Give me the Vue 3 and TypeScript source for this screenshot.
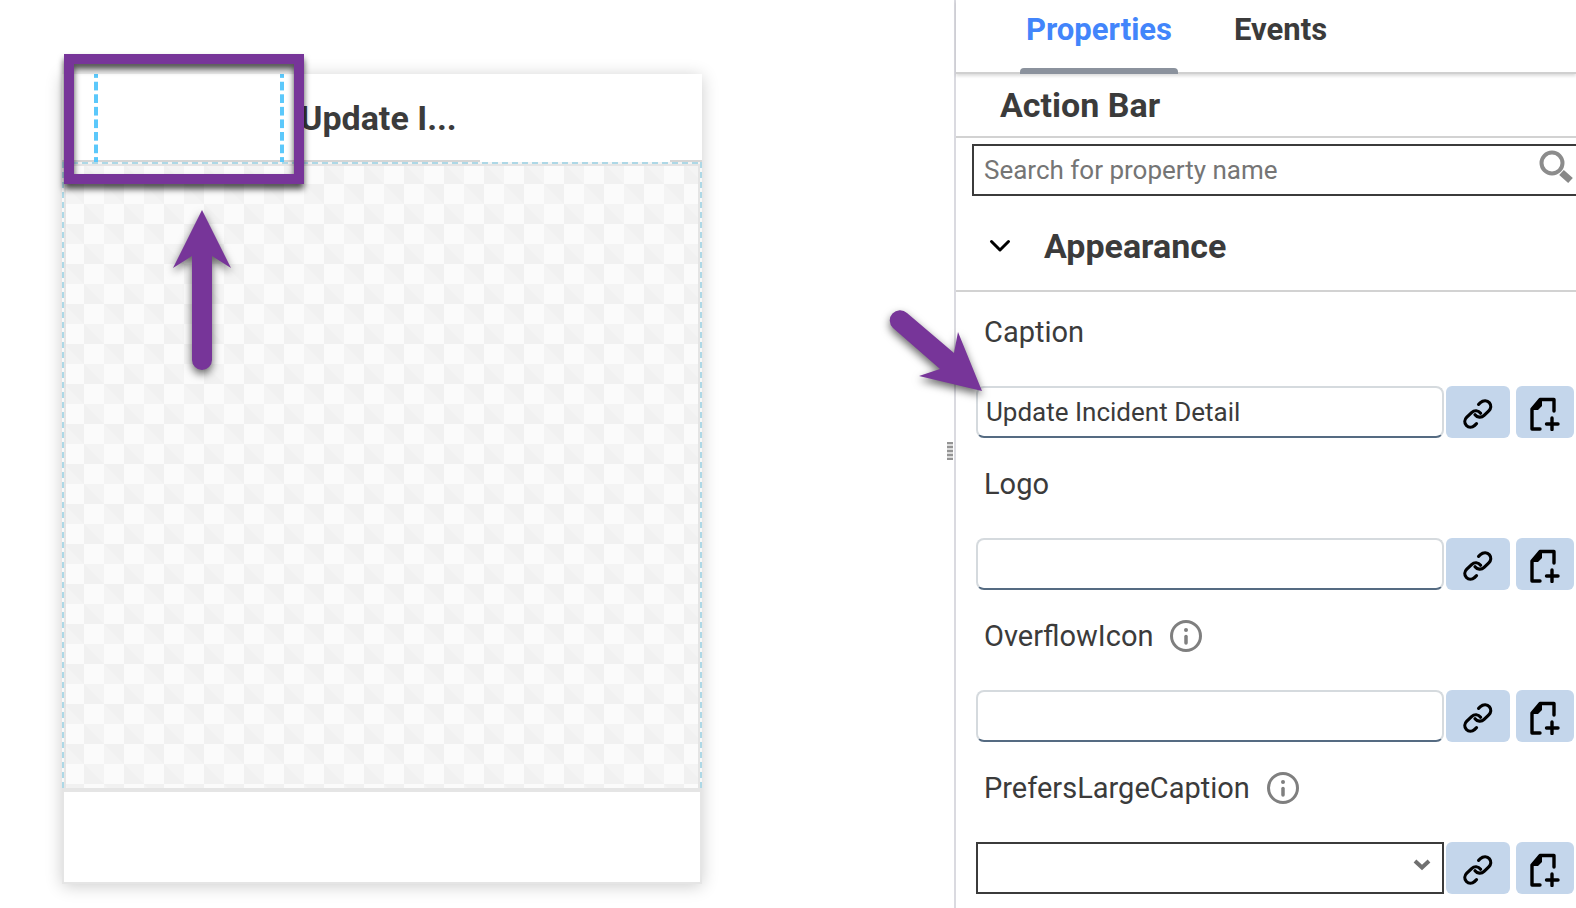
<script setup lang="ts">
import { ref } from 'vue'

interface Field {
  id: string
  label: string
  info: boolean
  kind: 'text' | 'select'
}

const fields: Field[] = [
  { id: 'caption', label: 'Caption', info: false, kind: 'text' },
  { id: 'logo', label: 'Logo', info: false, kind: 'text' },
  { id: 'overflow-icon', label: 'OverflowIcon', info: true, kind: 'text' },
  { id: 'prefers-large-caption', label: 'PrefersLargeCaption', info: true, kind: 'select' },
]

const values = ref<Record<string, string>>({
  caption: 'Update Incident Detail',
  logo: '',
  'overflow-icon': '',
  'prefers-large-caption': '',
})
const search = ref('')
const activeTab = ref('Properties')
const expanded = ref(true)
</script>

<template>
  <div class="editor">
    <main class="canvas">
      <section class="device">
        <header class="action-bar">
          <div class="logo-slot"></div>
          <h1 class="device-title">Update I...</h1>
          <span class="bar-line bar-line-start"></span>
          <span class="bar-line bar-line-end"></span>
        </header>
        <div class="device-body">
          <svg class="checker" width="100%" height="100%" aria-hidden="true">
            <defs>
              <pattern id="checks" width="40" height="40" patternUnits="userSpaceOnUse">
                <rect width="40" height="40" fill="#fbfbfb" />
                <path d="M20 0h20v20h-20zM0 20h20v20h-20z" fill="#f4f4f4" />
                <path d="M20 0v20h20zM0 20l20 20v-20z" fill="#f1f1f1" />
              </pattern>
            </defs>
            <rect width="100%" height="100%" fill="url(#checks)" />
          </svg>
          <span class="dash dash-top"></span>
          <span class="dash dash-left"></span>
          <span class="dash dash-right"></span>
          <div class="body-frame"></div>
        </div>
        <footer class="device-footer"></footer>
      </section>
      <div class="highlight"></div>
      <svg class="arrow arrow-up" width="80" height="190" viewBox="0 0 80 190" aria-hidden="true">
        <path d="M40 10 69 68 50 56V160a10 10 0 0 1-20 0V56L11 68Z" fill="#773599" />
      </svg>
    </main>

    <aside class="panel">
      <span class="grip"></span>
      <nav class="tabs">
        <button
          v-for="tab in ['Properties', 'Events']"
          :key="tab"
          type="button"
          class="tab"
          :class="{ active: tab === activeTab }"
          @click="activeTab = tab"
        >{{ tab }}</button>
      </nav>
      <h2 class="panel-title">Action Bar</h2>
      <div class="search">
        <input v-model="search" type="text" placeholder="Search for property name" aria-label="Search for property name" />
        <svg class="search-icon" width="34" height="34" viewBox="0 0 34 34" aria-hidden="true">
          <circle cx="13" cy="13" r="10.500" fill="none" stroke="#8c8c8c" stroke-width="4" />
          <path d="M22.500 22.500 31.500 30.500" stroke="#888" stroke-width="7" />
        </svg>
      </div>
      <button type="button" class="section-head" :aria-expanded="expanded" @click="expanded = !expanded">
        <svg width="24" height="16" viewBox="0 0 24 16" aria-hidden="true">
          <path d="M3.500 3.500 12 12 20.500 3.500" fill="none" stroke="#000" stroke-width="3" stroke-linecap="round" stroke-linejoin="round" />
        </svg>
        <span>Appearance</span>
      </button>

      <div v-show="expanded" class="fields">
        <div v-for="field in fields" :key="field.id" class="field">
          <div class="field-label">
            <label :for="field.id">{{ field.label }}</label>
            <svg v-if="field.info" width="32" height="32" viewBox="0 0 32 32" aria-hidden="true">
              <circle cx="16" cy="16" r="14.500" fill="none" stroke="#7f7f7f" stroke-width="3" />
              <circle cx="16" cy="10" r="2" fill="#7f7f7f" />
              <path d="M16 16.500V23" stroke="#7f7f7f" stroke-width="3.500" stroke-linecap="round" />
            </svg>
          </div>
          <div class="field-row">
            <input v-if="field.kind === 'text'" :id="field.id" v-model="values[field.id]" class="text-box" type="text" />
            <div v-else class="select-wrap">
              <select :id="field.id" v-model="values[field.id]">
                <option value=""></option>
                <option value="true">true</option>
                <option value="false">false</option>
              </select>
              <svg width="18" height="14" viewBox="0 0 18 14" aria-hidden="true">
                <path d="M2 3 9 9.500 16 3" fill="none" stroke="#707070" stroke-width="4" />
              </svg>
            </div>
            <button type="button" class="tool tool-link" aria-label="Link">
              <svg width="32" height="32" viewBox="0 0 32 32" aria-hidden="true">
                <g fill="none" stroke="#000" stroke-width="3.200" stroke-linecap="round">
                  <path d="M16.600 6.400l1.800-1.700c3-2.800 7-2.400 9 .1 2 2.500 1.700 5.800-.6 8l-4.700 4.600c-2.800 2.700-6.700 2.300-9.100-.7" />
                  <path d="M18.600 15.200c-2.300-3-6.200-3.300-9-.6l-4.800 4.500c-2.500 2.400-2.600 6-.4 8.400 2.200 2.300 5.700 2.300 8.200 0l1.900-1.800" />
                </g>
              </svg>
            </button>
            <button type="button" class="tool tool-add" aria-label="Add">
              <svg width="32" height="34" viewBox="0 0 32 34" aria-hidden="true">
                <g fill="none" stroke="#000" stroke-width="3.400" stroke-linecap="round" stroke-linejoin="round">
                  <path d="M11 32H3V12l8-9.500h14V14" />
                  <path d="M23 21v11.500M17.500 27h11.500" />
                </g>
                <path d="M3 13V10.500L10.500 2H13v7l-4 4Z" fill="#000" />
              </svg>
            </button>
          </div>
        </div>
      </div>
      <svg class="arrow arrow-caption" width="130" height="120" viewBox="0 0 130 120" aria-hidden="true">
        <path d="M37 13 84 53 88 32 112 91 49 76 70 69 23 28A10 10 0 0 1 37 13Z" fill="#773599" />
      </svg>
    </aside>
  </div>
</template>

<style>
body {
  background: #fff;
}
</style>

<style scoped>
* {
  box-sizing: border-box;
}

.editor {
  display: grid;
  grid-template-columns: minmax(0, 1fr) 622px;
  height: 100vh;
  overflow: hidden;
  font-family: Roboto, "Liberation Sans", sans-serif;
  color: #3b3b3b;
}

button,
input,
select {
  font-family: inherit;
  color: inherit;
  border-radius: 0;
  margin: 0;
}

.canvas {
  position: relative;
  padding: 74px 62px;
}

.device {
  width: 640px;
  box-shadow: 0 2px 16px rgba(0, 0, 0, 0.2);
}

.action-bar {
  position: relative;
  display: flex;
  align-items: center;
  height: 88px;
  padding-left: 32px;
  background: #fff;
}

.logo-slot {
  position: relative;
  z-index: 1;
  width: 190px;
  height: 88px;
  background:
    linear-gradient(#5bc8fb 4px, transparent 4px 8px, #5bc8fb 8px) left top / 4px calc(100% / 7) repeat-y,
    linear-gradient(#5bc8fb 4px, transparent 4px 8px, #5bc8fb 8px) right top / 4px calc(100% / 7) repeat-y;
}

.device-title {
  margin: 0 0 0 16px;
  font-size: 34px;
  line-height: 40px;
  font-weight: 700;
}

.bar-line {
  position: absolute;
  bottom: 0;
  height: 2px;
  background: #d6d6d6;
}

.bar-line-start {
  left: 0;
  width: 418px;
}

.bar-line-end {
  right: 0;
  width: 32px;
}

.device-body {
  position: relative;
  height: 626px;
  padding: 2px 2px 0;
  background: #fff;
}

.checker {
  display: block;
}

.body-frame {
  position: absolute;
  inset: 2px 2px 0;
  border: 2px solid #e5e5e5;
  border-bottom: 0;
}

.dash {
  position: absolute;
}

.dash-top {
  inset: 0 0 auto;
  height: 2px;
  background: repeating-linear-gradient(90deg, #add8e6 0 6px, #f4f4f4 6px 10px);
}

.dash-left,
.dash-right {
  top: 0;
  bottom: 0;
  width: 2px;
  background: repeating-linear-gradient(#add8e6 0 6px, #f8f8f8 6px 10px);
}

.dash-left {
  left: 0;
}

.dash-right {
  right: 0;
}

.device-footer {
  height: 96px;
  background: #fff;
  border: 2px solid #e5e5e5;
  border-top-width: 4px;
}

.highlight {
  position: absolute;
  z-index: 2;
  left: 64px;
  top: 54px;
  width: 240px;
  height: 130px;
  border: 10px solid #773599;
  filter: drop-shadow(0 5px 3px rgba(0, 0, 0, 0.7));
}

.arrow {
  position: absolute;
  filter: drop-shadow(0 4px 4px rgba(0, 0, 0, 0.6));
}

.arrow-up {
  left: 162px;
  top: 200px;
}

.arrow-caption {
  left: -86px;
  top: 300px;
}

.panel {
  position: relative;
  border-left: 2px solid #dadae0;
}

.grip {
  position: absolute;
  left: -9px;
  top: 442px;
  width: 6px;
  height: 18px;
  background: repeating-linear-gradient(#949494 0 2px, #dcdcdc 2px 4px);
}

.tabs {
  display: flex;
  gap: 50px;
  height: 74px;
  padding-left: 64px;
  border-bottom: 2px solid #d0d0d0;
  box-shadow: 0 2px 3px rgba(0, 0, 0, 0.14);
}

.tab {
  position: relative;
  height: 74px;
  padding: 0 6px 14px;
  border: 0;
  background: none;
  font-size: 31px;
  line-height: 36px;
  font-weight: 700;
}

.tab.active {
  color: #4285fb;
}

.tab.active::after {
  content: "";
  position: absolute;
  inset: auto 0 0;
  height: 6px;
  border-radius: 4px 4px 0 0;
  background: #8b929d;
}

.panel-title {
  height: 64px;
  margin: 0;
  padding: 12px 0 0 44px;
  border-bottom: 2px solid #d2d2d2;
  font-size: 34px;
  line-height: 38px;
  font-weight: 700;
}

.search {
  position: relative;
  margin: 6px 0 0 16px;
}

.search input {
  display: block;
  width: 100%;
  height: 52px;
  padding: 0 50px 0 10px;
  border: 2px solid #3b3b3b;
  border-right: 0;
  background: #fff;
  font-size: 26px;
}

.search input::placeholder {
  color: #757575;
  opacity: 1;
}

.search-icon {
  position: absolute;
  right: 3px;
  top: 6px;
}

.section-head {
  display: flex;
  align-items: center;
  gap: 32px;
  width: 100%;
  height: 96px;
  padding: 6px 0 0 32px;
  border: 0;
  border-bottom: 2px solid #d2d2d2;
  background: none;
  font-size: 34px;
  line-height: 40px;
  font-weight: 700;
}

.field {
  padding: 20px 2px 6px 20px;
}

.field-label {
  display: flex;
  align-items: center;
  gap: 17px;
  height: 40px;
  margin-bottom: 34px;
  padding-left: 8px;
  font-size: 29px;
}

.field-row {
  display: flex;
  height: 52px;
}

.text-box,
.select-wrap {
  flex: 1;
  min-width: 0;
}

.text-box {
  height: 52px;
  padding: 0 8px;
  border: 2px solid #d5dade;
  border-bottom-color: #556b82;
  border-radius: 8px;
  background: #fff;
  font-size: 26px;
}

.select-wrap {
  position: relative;
}

.select-wrap select {
  width: 100%;
  height: 52px;
  padding: 0 8px;
  border: 2px solid #3b3b3b;
  background: #fff;
  font-size: 26px;
  appearance: none;
}

.select-wrap svg {
  position: absolute;
  right: 13px;
  top: 16px;
}

.tool {
  display: flex;
  align-items: center;
  justify-content: center;
  height: 52px;
  padding: 4px 0 0;
  border: 0;
  border-radius: 6px;
  background: #c4d6eb;
}

.tool-link {
  width: 64px;
  margin-left: 2px;
}

.tool-add {
  width: 58px;
  margin-left: 6px;
}
</style>
